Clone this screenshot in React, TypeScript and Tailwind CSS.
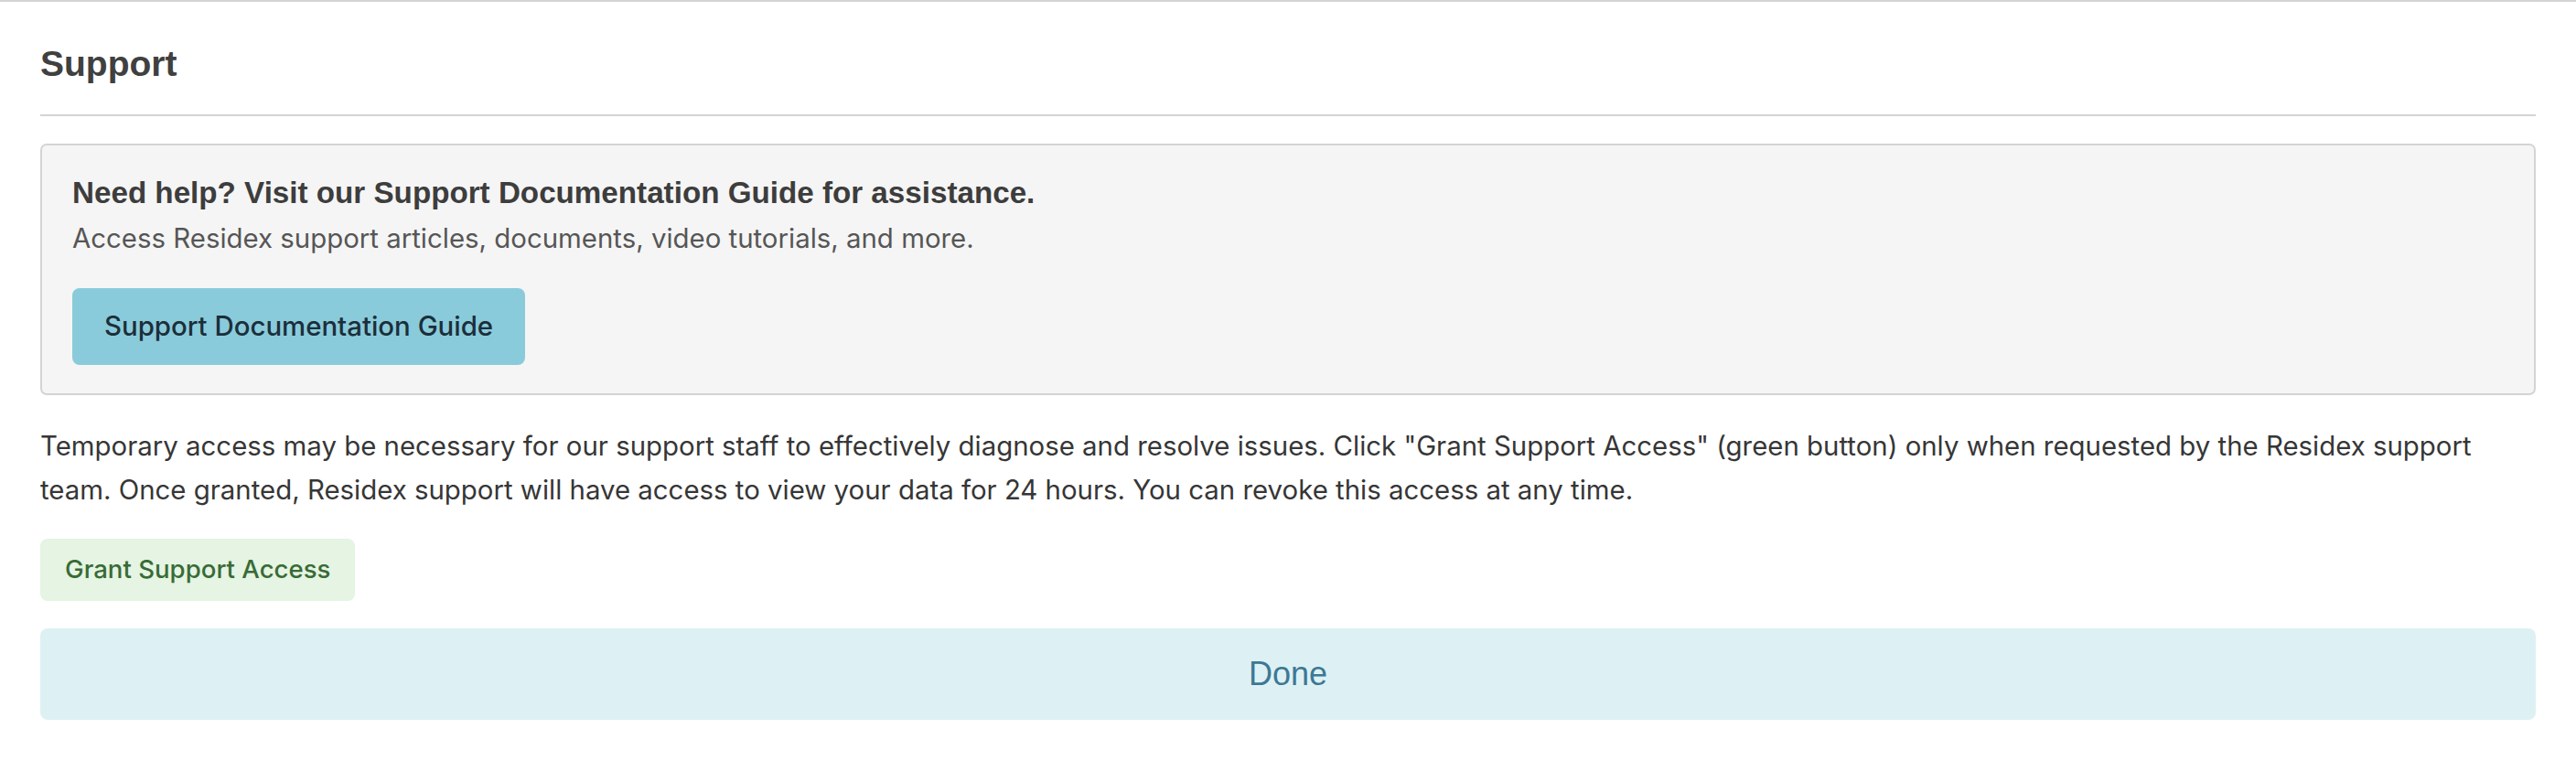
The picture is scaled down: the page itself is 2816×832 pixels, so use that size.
import React from "react";

export default function App() {
  return (
    <div className="min-h-[832px] w-full bg-white border-t-2 border-[#d4d4d4] px-[44px] pt-[44px]">
      <h1 className="font-['Liberation_Sans',Arial,sans-serif] font-bold text-[39px] leading-[47px] text-[#404040]">
        Support
      </h1>
      <div className="mt-[32px] h-[2px] bg-[#d4d4d4]" />
      <div className="mt-[30px] rounded-[7px] border-2 border-[#d4d4d4] bg-[#f5f5f5] pl-[33px] pr-[33px] pt-[33px] pb-[31px]">
        <h2 className="font-['Liberation_Sans',Arial,sans-serif] font-bold text-[33.2px] leading-[38px] text-[#3d3d3d]">
          Need help? Visit our Support Documentation Guide for assistance.
        </h2>
        <p className="mt-[10px] font-['Inter',sans-serif] text-[29.4px] leading-[42px] text-[#565656]">
          Access Residex support articles, documents, video tutorials, and more.
        </p>
        <button className="mt-[33px] h-[84px] rounded-[8px] bg-[#8acbdb] px-[35px] font-['Inter',sans-serif] font-medium text-[29.4px] text-[#1b2f3a]">
          Support Documentation Guide
        </button>
      </div>
      <p className="mt-[32px] font-['Inter',sans-serif] text-[29.4px] leading-[47.5px] text-[#363636]">
        Temporary access may be necessary for our support staff to effectively diagnose and resolve issues. Click "Grant Support Access" (green button) only when requested by the Residex support team. Once granted, Residex support will have access to view your data for 24 hours. You can revoke this access at any time.
      </p>
      <button className="mt-[30px] h-[68px] rounded-[8px] bg-[#e5f4e3] px-[27px] font-['Inter',sans-serif] font-medium text-[27.6px] text-[#386b35]">
        Grant Support Access
      </button>
      <button className="mt-[30px] flex h-[100px] w-full items-center justify-center rounded-[8px] bg-[#ddf1f4] font-['Liberation_Sans',Arial,sans-serif] font-medium text-[36px] text-[#3d7895]">
        Done
      </button>
    </div>
  );
}
